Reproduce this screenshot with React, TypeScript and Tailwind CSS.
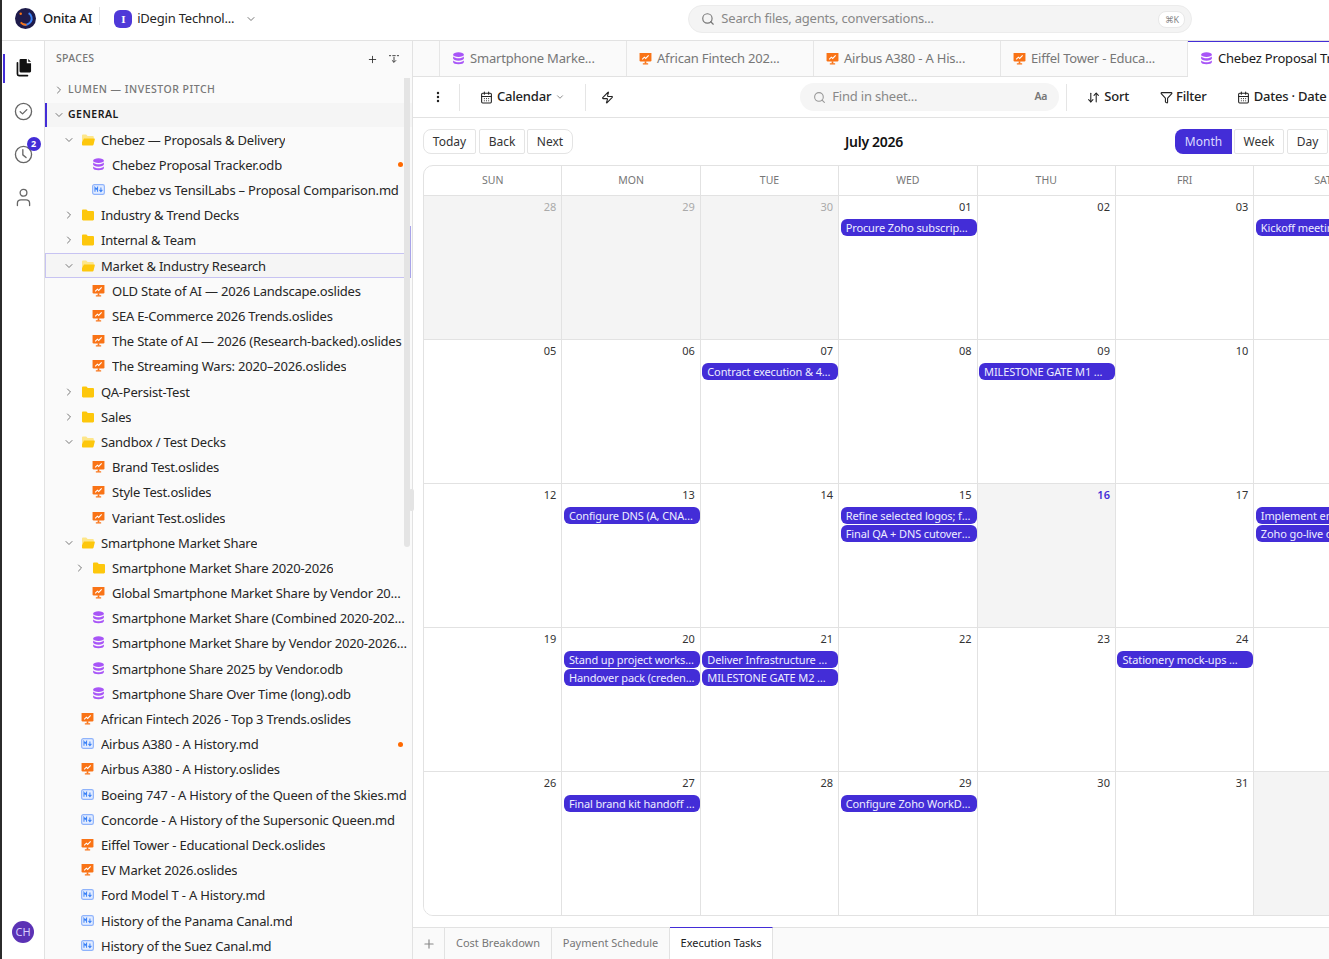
import React from "react";
import { ChevronRight, ChevronDown, Plus, Search, EllipsisVertical, Zap, ArrowDownUp, Funnel, CalendarDays } from "lucide-react";

function DbIcon({ className = "" }: { className?: string }) {
  return (
    <svg viewBox="0 0 14 14" className={className}>
      <ellipse cx="7" cy="2.9" rx="5.8" ry="2.5" fill="#a855f7" />
      <path d="M1.200 4.800C2.400 6.200 4.600 6.700 7 6.700s4.600-.5 5.800-1.900v2.300C12.800 8.500 10.200 9.300 7 9.300S1.200 8.500 1.200 7.100z" fill="#a855f7" />
      <path d="M1.200 9.100C2.400 10.500 4.600 11 7 11s4.600-.5 5.800-1.900v1.700C12.800 12.300 10.200 13.200 7 13.200s-5.800-.9-5.800-2.400z" fill="#a855f7" />
    </svg>
  );
}

function SlidesIcon({ className = "" }: { className?: string }) {
  return (
    <svg viewBox="0 0 14 14" className={className}>
      <path d="M.6 1.200h12.800v7.800a1.300 1.300 0 0 1-1.300 1.300H1.900A1.300 1.300 0 0 1 .6 9z" fill="#f97316" />
      <rect x="6.100" y="10" width="1.800" height="2.500" fill="#f97316" />
      <rect x="4" y="12.200" width="6" height="1.300" rx=".5" fill="#f97316" />
      <path d="M3.400 8 5.800 5.600l1.400 1.300 3.200-3.200" fill="none" stroke="#fff" strokeWidth="1.200" />
    </svg>
  );
}

function MdIcon({ className = "" }: { className?: string }) {
  return (
    <svg viewBox="0 0 14 14" className={className}>
      <rect x=".7" y="1.800" width="12.600" height="10.400" rx="1.800" fill="#e3ecff" stroke="#8fb3fb" strokeWidth="1.300" />
      <path d="M3.200 9.500V4.800l1.400 2 1.400-2v4.700" fill="none" stroke="#3b82f6" strokeWidth="1.100" />
      <path d="M9.600 4.800v4.200M8 7.500l1.600 1.800 1.600-1.800" fill="none" stroke="#3b82f6" strokeWidth="1.100" />
    </svg>
  );
}

function FolderIcon({ open, className = "" }: { open?: boolean; className?: string }) {
  return open ? (
    <svg viewBox="0 0 14 14" className={className}>
      <path d="M1 2.600c0-.7.500-1.200 1.200-1.200h3l1.400 1.500h5c.7 0 1.200.5 1.200 1.200V6H3L1 9z" fill="#fde68a" />
      <path d="M2.900 5.400H13c.6 0 1 .5.800 1.100l-1.300 5.300c-.1.500-.5.800-1 .8H2.200C1.500 12.600 1 12.100 1 11.400V9z" fill="#fdc70c" />
    </svg>
  ) : (
    <svg viewBox="0 0 14 14" className={className}>
      <path d="M1 2.600c0-.7.500-1.200 1.200-1.200h3.200l1.400 1.600h5c.7 0 1.200.5 1.200 1.200v7c0 .7-.5 1.200-1.200 1.200H2.200c-.7 0-1.200-.5-1.200-1.200z" fill="#fdc70c" />
    </svg>
  );
}

function FilesRail() {
  return (
    <svg viewBox="0 0 18 20" className="w-[17px] h-[19px]">
      <path d="M6 1h6.500v4.500H17V14a1.200 1.200 0 0 1-1.200 1.200H6A1.200 1.200 0 0 1 4.800 14V2.200A1.200 1.200 0 0 1 6 1z" fill="#111" />
      <path d="M14 1l3 3h-3z" fill="#111" />
      <path d="M2.600 5v12a1.600 1.600 0 0 0 1.600 1.600h9" fill="none" stroke="#111" strokeWidth="1.800" strokeLinecap="round" />
    </svg>
  );
}

function CheckRail() {
  return (
    <svg viewBox="0 0 20 20" className="w-[19px] h-[19px]" fill="none" stroke="#666" strokeWidth="1.400">
      <circle cx="10" cy="10" r="8.500" />
      <path d="M6.500 10.300 9 12.500l4.500-4.500" strokeLinecap="round" strokeLinejoin="round" />
    </svg>
  );
}

function ClockRail() {
  return (
    <svg viewBox="0 0 20 20" className="w-[19px] h-[19px]" fill="none" stroke="#666" strokeWidth="1.400">
      <circle cx="10" cy="10" r="8.500" />
      <path d="M9.300 4.800v5.600l3.400 2.800" strokeLinecap="round" strokeLinejoin="round" />
    </svg>
  );
}

function UserRail() {
  return (
    <svg viewBox="0 0 16 20" className="w-[15px] h-[19px]" fill="none" stroke="#666" strokeWidth="1.400">
      <circle cx="8" cy="5" r="3.600" />
      <path d="M1.500 18.500v-2.300c0-2.200 1.700-3.700 3.800-3.700h5.400c2.100 0 3.800 1.500 3.800 3.700v2.300" strokeLinecap="round" />
    </svg>
  );
}

function Logo() {
  return (
    <svg viewBox="0 0 22 22" className="w-[21px] h-[21px] shrink-0 -mt-px">
      <circle cx="11" cy="11" r="11" fill="#1e1b4b" />
      <circle cx="11" cy="11" r="6.500" fill="none" stroke="#3b82f6" strokeWidth="2" strokeDasharray="20 21" transform="rotate(-60 11 11)" />
      <path d="M6 15A6.500 6.500 0 0 0 12 17.400" fill="none" stroke="#f97316" strokeWidth="2" />
      <circle cx="6" cy="6" r="1.300" fill="#f97316" />
    </svg>
  );
}

type Row = { label: string; kind: "folder" | "open" | "db" | "md" | "slides"; depth: 1 | 2; dot?: boolean; selected?: boolean };

const rows: Row[] = [
  { label: "Chebez — Proposals & Delivery", kind: "open", depth: 1 },
  { label: "Chebez Proposal Tracker.odb", kind: "db", depth: 2, dot: true },
  { label: "Chebez vs TensilLabs – Proposal Comparison.md", kind: "md", depth: 2 },
  { label: "Industry & Trend Decks", kind: "folder", depth: 1 },
  { label: "Internal & Team", kind: "folder", depth: 1 },
  { label: "Market & Industry Research", kind: "open", depth: 1, selected: true },
  { label: "OLD State of AI — 2026 Landscape.oslides", kind: "slides", depth: 2 },
  { label: "SEA E-Commerce 2026 Trends.oslides", kind: "slides", depth: 2 },
  { label: "The State of AI — 2026 (Research-backed).oslides", kind: "slides", depth: 2 },
  { label: "The Streaming Wars: 2020–2026.oslides", kind: "slides", depth: 2 },
  { label: "QA-Persist-Test", kind: "folder", depth: 1 },
  { label: "Sales", kind: "folder", depth: 1 },
  { label: "Sandbox / Test Decks", kind: "open", depth: 1 },
  { label: "Brand Test.oslides", kind: "slides", depth: 2 },
  { label: "Style Test.oslides", kind: "slides", depth: 2 },
  { label: "Variant Test.oslides", kind: "slides", depth: 2 },
  { label: "Smartphone Market Share", kind: "open", depth: 1 },
  { label: "Smartphone Market Share 2020-2026", kind: "folder", depth: 2 },
  { label: "Global Smartphone Market Share by Vendor 2020-2026.oslides", kind: "slides", depth: 2 },
  { label: "Smartphone Market Share (Combined 2020-2026).odb", kind: "db", depth: 2 },
  { label: "Smartphone Market Share by Vendor 2020-2026.odb", kind: "db", depth: 2 },
  { label: "Smartphone Share 2025 by Vendor.odb", kind: "db", depth: 2 },
  { label: "Smartphone Share Over Time (long).odb", kind: "db", depth: 2 },
  { label: "African Fintech 2026 - Top 3 Trends.oslides", kind: "slides", depth: 1 },
  { label: "Airbus A380 - A History.md", kind: "md", depth: 1, dot: true },
  { label: "Airbus A380 - A History.oslides", kind: "slides", depth: 1 },
  { label: "Boeing 747 - A History of the Queen of the Skies.md", kind: "md", depth: 1 },
  { label: "Concorde - A History of the Supersonic Queen.md", kind: "md", depth: 1 },
  { label: "Eiffel Tower - Educational Deck.oslides", kind: "slides", depth: 1 },
  { label: "EV Market 2026.oslides", kind: "slides", depth: 1 },
  { label: "Ford Model T - A History.md", kind: "md", depth: 1 },
  { label: "History of the Panama Canal.md", kind: "md", depth: 1 },
  { label: "History of the Suez Canal.md", kind: "md", depth: 1 },
];

function TreeRow({ row }: { row: Row }) {
  const isFolder = row.kind === "folder" || row.kind === "open";
  const pad = row.selected ? "pl-[17px] bg-[#f5f5f5] border-y border-l border-[#c7c3f2]" : row.depth === 1 ? "pl-[18px]" : "pl-[29px]";
  return (
    <div className={`relative flex items-center h-[25.2px] shrink-0 pr-[1px] ${pad}`}>
      <span className="w-[12px] shrink-0 flex justify-center text-[#777]">
        {row.kind === "open" ? <ChevronDown size={12} /> : row.kind === "folder" ? <ChevronRight size={12} /> : null}
      </span>
      <span className="w-[14px] h-[14px] ml-[6px] shrink-0">
        {row.kind === "db" && <DbIcon className="w-[13px] h-[13px]" />}
        {row.kind === "md" && <MdIcon className="w-[13px] h-[13px]" />}
        {row.kind === "slides" && <SlidesIcon className="w-[13px] h-[13px]" />}
        {isFolder && <FolderIcon open={row.kind === "open"} className="w-[14px] h-[14px]" />}
      </span>
      <span className="ml-[6px] text-[13px] tracking-[-0.2px] leading-[18px] text-[#262626] truncate">{row.label}</span>
      {row.dot && <span className="absolute right-[6px] top-[10px] w-[5px] h-[5px] rounded-full bg-orange-500" />}
    </div>
  );
}

type Tab = { label: string; kind: "db" | "slides"; active?: boolean };
const tabs: Tab[] = [
  { label: "Smartphone Marke...", kind: "db" },
  { label: "African Fintech 202...", kind: "slides" },
  { label: "Airbus A380 - A His...", kind: "slides" },
  { label: "Eiffel Tower - Educa...", kind: "slides" },
  { label: "Chebez Proposal Tracker", kind: "db", active: true },
];

type Cell = { d: string; muted?: boolean; today?: boolean; gray?: boolean; events?: string[] };
const cells: Cell[] = [
  { d: "28", muted: true, gray: true },
  { d: "29", muted: true, gray: true },
  { d: "30", muted: true, gray: true },
  { d: "01", events: ["Procure Zoho subscription and domain"] },
  { d: "02" },
  { d: "03" },
  { d: "04", events: ["Kickoff meeting with stakeholders"] },
  { d: "05" },
  { d: "06" },
  { d: "07", events: ["Contract execution & 4 more items"] },
  { d: "08" },
  { d: "09", events: ["MILESTONE GATE M1 — Contract"] },
  { d: "10" },
  { d: "11" },
  { d: "12" },
  { d: "13", events: ["Configure DNS (A, CNAME, MX records)"] },
  { d: "14" },
  { d: "15", events: ["Refine selected logos; finalize palette", "Final QA + DNS cutover checklist"] },
  { d: "16", today: true, gray: true },
  { d: "17" },
  { d: "18", events: ["Implement email routing", "Zoho go-live on domain"] },
  { d: "19" },
  { d: "20", events: ["Stand up project workspace", "Handover pack (credentials and docs)"] },
  { d: "21", events: ["Deliver Infrastructure package", "MILESTONE GATE M2 — Infrastructure"] },
  { d: "22" },
  { d: "23" },
  { d: "24", events: ["Stationery mock-ups — final review"] },
  { d: "25" },
  { d: "26" },
  { d: "27", events: ["Final brand kit handoff to client team"] },
  { d: "28" },
  { d: "29", events: ["Configure Zoho WorkDrive and mail"] },
  { d: "30" },
  { d: "31" },
  { d: "01", muted: true, gray: true },
];

const days = ["SUN", "MON", "TUE", "WED", "THU", "FRI", "SAT"];

function CalCell({ cell, index }: { cell: Cell; index: number }) {
  return (
    <div className={`h-[144px] min-w-0 border-r border-[#e2e2e2] ${index < 28 ? "border-b" : ""} ${cell.gray ? "bg-[#f4f4f4]" : "bg-white"}`}>
      <div
        className={`h-[23px] pr-[5px] pt-[3px] text-right text-[11px] leading-[15px] ${
          cell.muted ? "text-[#aaa]" : cell.today ? "text-indigo-700 font-semibold" : "text-[#333]"
        }`}
      >
        {cell.d}
      </div>
      <div className="flex flex-col gap-[1px] pl-[1.5px]">
        {(cell.events ?? []).map((e) => (
          <div key={e} className="h-[17px] rounded-[6px] bg-indigo-700 pl-[5px] pr-[5px] text-[11px] tracking-[-0.12px] leading-[17px] text-[#eeedff] truncate">
            {e}
          </div>
        ))}
      </div>
    </div>
  );
}

export default function App() {
  return (
    <div className="w-[1329px] h-[959px] overflow-hidden flex bg-white font-['Noto_Sans','Liberation_Sans',sans-serif]">
      <div className="w-[2px] shrink-0 bg-[#2b2b2b]" />
      <div className="flex-1 min-w-0 flex flex-col">
        {/* top bar */}
        <header className="h-[41px] shrink-0 flex items-center border-b border-[#e2e2e2] pl-[13px] pb-[2px] tracking-[-0.2px]">
          <Logo />
          <span className="ml-[7px] text-[13px] font-medium text-[#1a1a1a]">Onita AI</span>
          <span className="ml-[7px] w-px h-[18px] -mt-[6px] bg-[#e5e5e5]" />
          <span className="ml-[14px] w-[18px] h-[18px] rounded-[6px] bg-[#4f39d8] text-white text-[11px] leading-[18px] text-center font-['Liberation_Serif',serif] font-bold">I</span>
          <span className="ml-[5px] text-[13px] text-[#262626]">iDegin Technol...</span>
          <ChevronDown size={12} className="ml-[11px] text-[#777]" />
          <div className="ml-[431px] w-[504px] h-[28px] rounded-full bg-[#f4f4f4] border border-[#ececec] flex items-center pl-[12px] pr-[6px]">
            <Search size={14} className="text-[#777]" />
            <span className="ml-[6px] text-[13px] text-[#888]">Search files, agents, conversations...</span>
            <span className="ml-auto h-[17px] w-[27px] rounded-[8px] bg-white border border-[#e8e8e8] text-[9px] leading-[15px] text-center text-[#888]">⌘K</span>
          </div>
        </header>

        <div className="relative flex-1 min-h-0 flex">
          <span className="absolute z-20 left-[407px] top-[448px] w-[5px] h-[22px] rounded-[2px] bg-[#e4e4e4]" />
          {/* rail */}
          <nav className="w-[43px] shrink-0 border-r border-[#e2e2e2] flex flex-col items-center relative">
            <span className="absolute left-[1px] top-[13px] w-[2px] h-[29px] bg-indigo-700" />
            <div className="mt-[16px] h-[21px] flex items-center justify-center"><FilesRail /></div>
            <div className="mt-[23px] h-[21px] flex items-center justify-center"><CheckRail /></div>
            <div className="mt-[22px] h-[21px] flex items-center justify-center relative">
              <ClockRail />
              <span className="absolute left-[13px] -top-[7px] w-[14px] h-[14px] rounded-full bg-indigo-700 text-white text-[9px] leading-[14px] text-center font-bold">2</span>
            </div>
            <div className="mt-[22px] h-[21px] flex items-center justify-center"><UserRail /></div>
            <span className="mt-auto mb-[16px] w-[22px] h-[22px] rounded-full bg-[#5b32b5] text-[#d9ceff] text-[11px] leading-[22px] text-center">CH</span>
          </nav>

          {/* sidebar */}
          <aside className="relative w-[368px] shrink-0 bg-[#fafafa] border-r border-[#e2e2e2] flex flex-col overflow-hidden pr-[3px]">
            <span className="absolute z-10 right-[2px] top-[37px] w-[6px] h-[469px] rounded-b-[3px] bg-[#e4e4e4]" />
            <span className="absolute z-10 right-[1px] top-[185px] w-px h-[52px] bg-[#a9a4ea]" />
            <div className="h-[37px] shrink-0 flex items-center pl-[11px] pr-[10px] pb-[1px]">
              <span className="text-[10.5px] font-medium tracking-[0.3px] text-[#777]">SPACES</span>
              <Plus size={11} className="ml-auto text-[#222]" strokeWidth={1.8} />
              <svg viewBox="0 0 12 12" className="ml-[11px] w-[10px] h-[10px]" fill="none" stroke="#444" strokeWidth="1.2">
                <path d="M0 2h2.500M4 2h4M9.500 2H12M6 3.500v6.500M3.500 7.500 6 10l2.500-2.500" />
              </svg>
            </div>
            <div className="h-[24.5px] shrink-0 flex items-center pl-[8px]">
              <ChevronRight size={12} className="text-[#777]" />
              <span className="ml-[3px] text-[10.5px] font-medium tracking-[0.5px] text-[#777]">LUMEN — INVESTOR PITCH</span>
            </div>
            <div className="h-[24.6px] shrink-0 flex items-center pl-[6px] pt-[1px] bg-[#f5f5f5] border-l-2 border-indigo-700 -mr-[3px]">
              <ChevronDown size={12} className="text-[#777]" />
              <span className="ml-[3px] text-[10.5px] font-semibold tracking-[0.5px] text-[#1a1a1a]">GENERAL</span>
            </div>
            {rows.map((r) => (
              <TreeRow key={r.label} row={r} />
            ))}
          </aside>

          {/* main */}
          <main className="flex-1 min-w-0 flex flex-col overflow-hidden">
            <div className="h-[36px] shrink-0 flex border-b border-[#e2e2e2] bg-[#fafafa]">
              <div className="w-[27px] shrink-0 border-r border-[#e6e6e6]" />
              {tabs.map((t) => (
                <div
                  key={t.label}
                  className={`w-[187px] shrink-0 flex items-center pl-[12px] border-r border-[#e6e6e6] text-[13px] tracking-[-0.2px] whitespace-nowrap ${
                    t.active ? "bg-white border-t border-t-indigo-700 text-[#1a1a1a] -mb-px pb-[2px]" : "text-[#777]"
                  }`}
                >
                  {t.kind === "db" ? <DbIcon className="w-[13px] h-[13px] shrink-0" /> : <SlidesIcon className="w-[13px] h-[13px] shrink-0" />}
                  <span className="ml-[5px]">{t.label}</span>
                </div>
              ))}
            </div>

            <div className="h-[41px] shrink-0 flex items-center border-b border-[#e2e2e2] whitespace-nowrap text-[13px] tracking-[-0.2px] font-medium text-[#222]">
              <EllipsisVertical size={14} className="ml-[18px] shrink-0 text-[#222]" strokeWidth={2.2} />
              <span className="ml-[14px] w-px h-[27px] shrink-0 bg-[#e5e5e5]" />
              <CalendarDays size={13} className="ml-[20px] shrink-0" />
              <span className="ml-[4px]">Calendar</span>
              <ChevronDown size={10} className="ml-[4px] shrink-0 text-[#777]" />
              <span className="ml-[20px] w-px h-[27px] shrink-0 bg-[#e5e5e5]" />
              <Zap size={13} className="ml-[15px] shrink-0" strokeWidth={2} />
              <div className="ml-[186px] w-[259px] h-[28px] shrink-0 rounded-full bg-[#f5f5f5] flex items-center pl-[13px] pr-[12px]">
                <Search size={13} className="text-[#999]" />
                <span className="ml-[6px] font-normal text-[#888]">Find in sheet...</span>
                <span className="ml-auto text-[10.5px] font-semibold text-[#777]">Aa</span>
              </div>
              <span className="ml-[7px] w-px h-[27px] shrink-0 bg-[#e5e5e5]" />
              <ArrowDownUp size={13} className="ml-[20px] shrink-0" />
              <span className="ml-[4px]">Sort</span>
              <Funnel size={13} className="ml-[31px] shrink-0" />
              <span className="ml-[3px]">Filter</span>
              <CalendarDays size={13} className="ml-[30px] shrink-0" />
              <span className="ml-[4px]">Dates · Date</span>
            </div>

            <div className="flex-1 min-h-0 pl-[10px] pt-[11px] flex flex-col">
              <div className="w-[905px] h-[25px] shrink-0 flex items-center text-[12px] text-[#333]">
                <button className="h-[25px] w-[53px] rounded-l-[8px] rounded-r-[2px] border border-[#e4e4e4]">Today</button>
                <button className="ml-[3px] h-[25px] w-[46px] rounded-[2px] border border-[#e4e4e4]">Back</button>
                <button className="ml-[2px] h-[25px] w-[46px] rounded-r-[8px] rounded-l-[2px] border border-[#e4e4e4]">Next</button>
                <span className="mx-auto text-[14px] tracking-[-0.3px] font-semibold text-[#111] -mt-px">July 2026</span>
                <button className="h-[25px] w-[57px] rounded-l-[8px] bg-indigo-700 text-[#dcd9ff]">Month</button>
                <button className="ml-[2px] h-[25px] w-[50px] rounded-[2px] border border-[#e4e4e4]">Week</button>
                <button className="ml-[3px] h-[25px] w-[41px] rounded-[2px] border border-[#e4e4e4]">Day</button>
              </div>
              <div className="mt-[11px] w-[969px] h-[751px] shrink-0 border border-[#e2e2e2] rounded-l-[10px] overflow-hidden">
                <div className="grid grid-cols-[repeat(7,138.4px)] h-[30px] border-b border-[#e2e2e2]">
                  {days.map((d) => (
                    <div key={d} className="border-r border-[#e2e2e2] text-center text-[10.5px] leading-[29px] text-[#777]">
                      {d}
                    </div>
                  ))}
                </div>
                <div className="grid grid-cols-[repeat(7,138.4px)]">
                  {cells.map((c, i) => (
                    <CalCell key={i} cell={c} index={i} />
                  ))}
                </div>
              </div>
            </div>

            <div className="h-[32px] shrink-0 flex border-t border-[#e2e2e2] bg-[#fafafa] text-[11px] text-[#777]">
              <div className="w-[32px] shrink-0 border-r border-[#e2e2e2] flex items-center justify-center">
                <Plus size={14} className="text-[#888]" />
              </div>
              <div className="w-[107px] shrink-0 border-r border-[#e2e2e2] flex items-center justify-center">Cost Breakdown</div>
              <div className="w-[118px] shrink-0 border-r border-[#e2e2e2] flex items-center justify-center">Payment Schedule</div>
              <div className="w-[103px] shrink-0 border-r border-[#e2e2e2] -mt-px border-t border-t-indigo-700 bg-white text-[#222] flex items-center justify-center">Execution Tasks</div>
            </div>
          </main>
        </div>
      </div>
    </div>
  );
}
